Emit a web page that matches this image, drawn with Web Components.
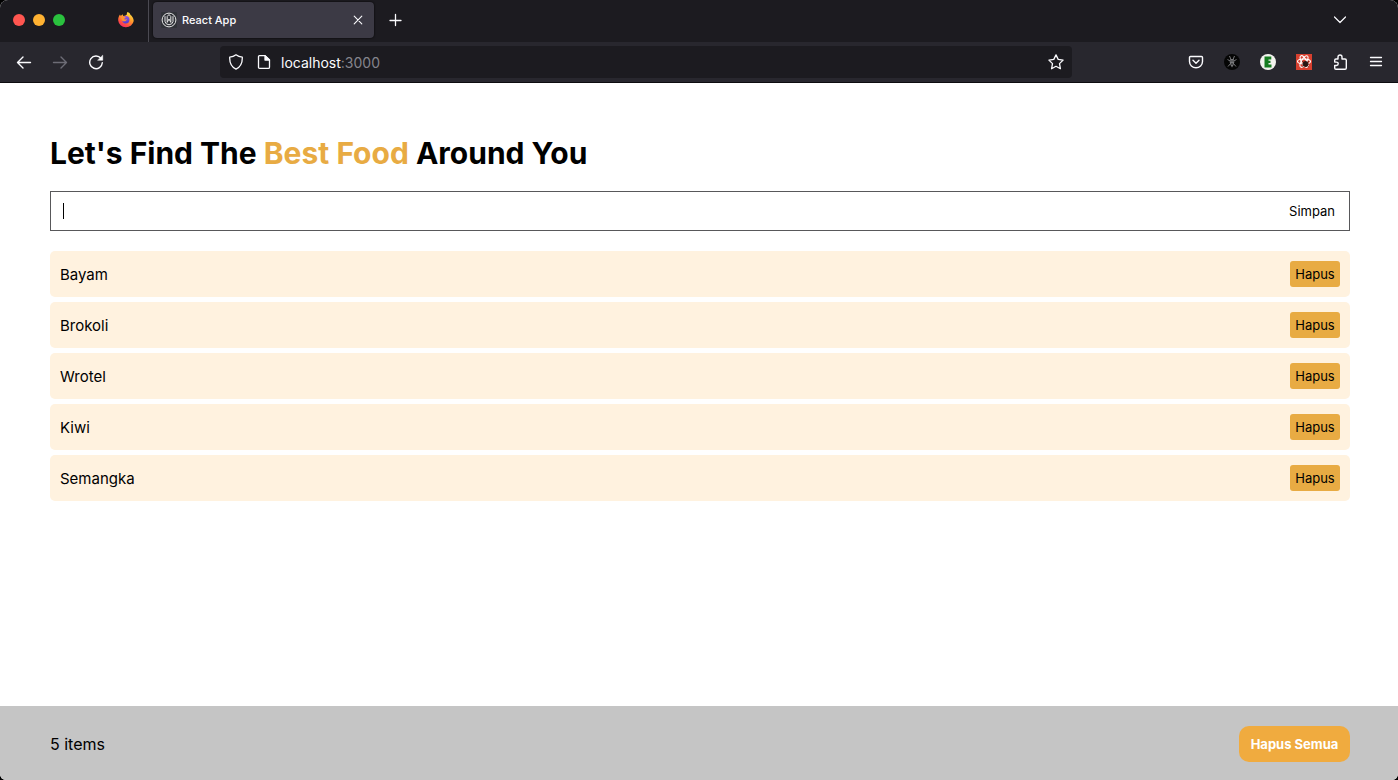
<!DOCTYPE html>
<html lang="id">
<head>
<meta charset="utf-8">
<meta name="viewport" content="width=device-width, initial-scale=1">
<title>React App</title>
<style>
  html { background: #000; }
  body { margin: 0; font-family: Inter, "Liberation Sans", sans-serif; color: #000; }
</style>
</head>
<body>
<browser-window>
  <tab-strip slot="chrome"><browser-tab>React App</browser-tab></tab-strip>
  <nav-toolbar slot="chrome" host="localhost" port=":3000"></nav-toolbar>
  <food-app></food-app>
</browser-window>

<script>
const define = (name, html, setup) => {
  const template = document.createElement('template');
  template.innerHTML = html;
  customElements.define(name, class extends HTMLElement {
    constructor() {
      super();
      this.attachShadow({ mode: 'open' }).append(template.content.cloneNode(true));
    }
    connectedCallback() {
      if (setup && !this.ready) { this.ready = true; setup(this, this.shadowRoot); }
    }
  });
};

define('browser-window', `
  <style>
    :host { display: flex; flex-direction: column; min-height: 100vh; background: #fff; border-radius: 8px 8px 6px 6px; overflow: hidden; }
    main { flex: 1; display: flex; flex-direction: column; }
  </style>
  <header><slot name="chrome"></slot></header>
  <main><slot></slot></main>`);

define('icon-button', `
  <style>
    :host { display: block; width: 36px; height: 32px; color: #fbfbfe; }
    :host([muted]) { color: #6d6c76; }
    button { all: unset; width: 100%; height: 100%; display: grid; place-items: center; }
    ::slotted(svg) { display: block; }
  </style>
  <button type="button"><slot></slot></button>`,
  (el, root) => root.querySelector('button').setAttribute('aria-label', el.getAttribute('label') || ''));

define('browser-tab', `
  <style>
    :host { display: flex; align-items: center; box-sizing: border-box; width: 221px; height: 36px; padding: 0 8px; gap: 5px; border-radius: 4px; background: #3c3a45; color: #fbfbfe; font-size: 11px; font-weight: 500; box-shadow: 0 0 2px #000; }
    .title { flex: 1; }
    svg { display: block; }
    button { all: unset; width: 16px; height: 16px; }
  </style>
  <svg width="16" height="16" viewBox="0 0 16 16" fill="none" stroke="#e6e6e6">
    <rect width="16" height="16" rx="1" fill="#303238" stroke="none"/>
    <circle cx="8" cy="8" r="6.9"/>
    <path d="M4 4.200V9.500Q4.500 12.500 8 12.800Q11.500 12.500 12 9.500V4.200M6.200 10.500V4.500L8 2.500L9.800 4.500V10.500M6.200 10.300L8 7L9.800 10.300"/>
  </svg>
  <span class="title"><slot></slot></span>
  <button type="button" aria-label="Close tab">
    <svg width="16" height="16" viewBox="0 0 16 16" fill="none" stroke="#fbfbfe" stroke-width="1.1" stroke-linecap="round"><path d="M4.2 4.2L11.8 11.8M11.8 4.2L4.2 11.8"/></svg>
  </button>`);

define('tab-strip', `
  <style>
    :host { display: flex; height: 42px; background: #1c1b20; }
    .lights { display: flex; gap: 8px; padding: 14px 0 0 13px; }
    .lights i { width: 12px; height: 12px; border-radius: 50%; }
    .pin { display: grid; place-items: center; width: 44px; height: 40px; margin-left: 39px; }
    .pin svg { display: block; }
    .rule { width: 1px; background: #4b4a52; margin-right: 4px; }
    slot { display: block; padding-top: 2px; }
    .add { margin: 4px 0 0 4px; }
    .all { margin: 4px 40px 0 auto; }
  </style>
  <div class="lights"><i style="background:#ff5650"></i><i style="background:#ffb232"></i><i style="background:#2ac23e"></i></div>
  <div class="pin">
    <svg width="18" height="18" viewBox="0 0 18 18">
      <defs>
        <linearGradient id="flame" x1="14" y1="1" x2="5" y2="17" gradientUnits="userSpaceOnUse"><stop offset="0" stop-color="#fff04a"/><stop offset=".4" stop-color="#ffa02b"/><stop offset=".75" stop-color="#ff4a42"/><stop offset="1" stop-color="#ef1f7c"/></linearGradient>
        <linearGradient id="globe" x1="8" y1="4" x2="9" y2="13" gradientUnits="userSpaceOnUse"><stop offset="0" stop-color="#9a55ef"/><stop offset="1" stop-color="#4c3ccb"/></linearGradient>
      </defs>
      <path d="M10.5 1C12 1.3 13.2 2.7 13.5 4C14.3 4.3 16.7 6.8 16.7 10A7.8 7.2 0 0 1 1.2 9.6C1 7.2 1.8 5.1 3 3.5L3.8 5L5.5 3.3L6.3 5C8 4.8 9.4 4.2 9.8 3.5C9.7 2.5 10 1.6 10.5 1Z" fill="url(#flame)"/>
      <circle cx="8.8" cy="8.8" r="3.7" fill="url(#globe)"/>
      <path d="M4 6C6 4.8 8 5.5 9 6.8C8 6.9 7.3 7.4 7.3 8C8 9 9.3 8.3 10 8C9.7 10.5 6.5 11 5 9.5Z" fill="#ff9130"/>
    </svg>
  </div>
  <div class="rule"></div>
  <slot></slot>
  <icon-button class="add" label="New tab"><svg width="16" height="16" viewBox="0 0 16 16" fill="none" stroke="currentColor" stroke-width="1.3" stroke-linecap="round"><path d="M7.5 2.5V13.5M2 8.5H13"/></svg></icon-button>
  <icon-button class="all" label="List all tabs"><svg width="16" height="16" viewBox="0 0 16 16" fill="none" stroke="currentColor" stroke-width="1.2" stroke-linecap="round" stroke-linejoin="round"><path d="M2.5 5L8 10.5L13.5 5"/></svg></icon-button>`);

define('nav-toolbar', `
  <style>
    :host { display: flex; align-items: center; box-sizing: border-box; height: 41px; padding: 0 4px 0 6px; background: #28272e; border-bottom: 1px solid #0d0c10; }
    .group { display: flex; }
    form { flex: 1; display: flex; align-items: center; height: 32px; margin: 0 106px; border-radius: 4px; background: #1c1b20; color: #fbfbfe; }
    form > svg { display: block; margin-left: 8px; }
    form > svg + svg { margin-left: 12px; }
    .address { flex: 1; margin-left: 9px; font-size: 14px; }
    .port { color: #85848c; }
    form icon-button { width: 32px; }
  </style>
  <div class="group">
    <icon-button label="Back"><svg width="16" height="16" viewBox="0 0 16 16" fill="none" stroke="currentColor" stroke-width="1.4" stroke-linecap="round" stroke-linejoin="round"><path d="M14.5 8.5H1.5M7 3L1.5 8.5L7 14"/></svg></icon-button>
    <icon-button label="Forward" muted><svg width="16" height="16" viewBox="0 0 16 16" fill="none" stroke="currentColor" stroke-width="1.4" stroke-linecap="round" stroke-linejoin="round"><path d="M1.5 8.5H14.5M9 3L14.5 8.5L9 14"/></svg></icon-button>
    <icon-button label="Reload"><svg width="16" height="16" viewBox="0 0 16 16" fill="none" stroke="currentColor" stroke-width="1.4" stroke-linecap="round"><path d="M13 4.5A6.3 6.3 0 1 0 14.3 8.7"/><path d="M14.7 1.6V6.2H10Z" fill="currentColor" stroke-width=".6" stroke-linejoin="round"/></svg></icon-button>
  </div>
  <form>
    <svg width="16" height="16" viewBox="0 0 16 16" fill="none" stroke="#fbfbfe" stroke-width="1.3" stroke-linejoin="round"><path d="M8 .8C9.5 2 12 3 14.3 3.2C14.5 8.5 13 12.8 8 15.2C3 12.8 1.5 8.5 1.7 3.2C4 3 6.5 2 8 .8Z"/></svg>
    <svg width="16" height="16" viewBox="0 0 16 16" fill="none" stroke="#fbfbfe" stroke-width="1.3" stroke-linejoin="round"><path d="M3.5 1.6H9L13.5 6V13.2Q13.5 14.4 12.3 14.4H3.7Q2.5 14.4 2.5 13.2V2.6Q2.5 1.6 3.5 1.6Z"/><path d="M9 1.6V6H13.5Z" fill="#fbfbfe"/></svg>
    <div class="address"><span class="host"></span><span class="port"></span></div>
    <icon-button label="Bookmark"><svg width="16" height="16" viewBox="0 0 16 16" fill="none" stroke="currentColor" stroke-width="1.3" stroke-linejoin="round"><path d="M8 .9L10.2 5.4L15.1 6.1L11.5 9.6L12.4 14.7L8 12.3L3.6 14.7L4.5 9.6L.9 6.1L5.8 5.4Z"/></svg></icon-button>
  </form>
  <div class="group">
    <icon-button label="Pocket"><svg width="16" height="16" viewBox="0 0 16 16" fill="none" stroke="currentColor" stroke-width="1.4" stroke-linecap="round" stroke-linejoin="round"><path d="M2.5 2.5H13.5Q14.5 2.5 14.5 3.5V7.5A6.5 6.3 0 0 1 1.5 7.5V3.5Q1.5 2.5 2.5 2.5Z"/><path d="M5 6.3L8 9.2L11 6.3"/></svg></icon-button>
    <icon-button label="Extension"><svg width="16" height="16" viewBox="0 0 16 16"><circle cx="8" cy="8" r="8" fill="#050505"/><path d="M5.5 2L7 5.500H9L10.500 2M3.500 5.500L8 8L12.500 5.500M4 12.500L7 9M12 12.500L9 9" fill="none" stroke="#77777a"/><path d="M6.300 5H9.700L10.300 8L9.500 11L8 13.500L6.500 11L5.700 8Z" fill="#77777a"/><path d="M6.5 7H7.500M8.500 7H9.500M7 10H9" stroke="#171717"/></svg></icon-button>
    <icon-button label="Evernote clipper"><svg width="16" height="16" viewBox="0 0 16 16"><circle cx="8" cy="8" r="8" fill="#f3f3ee"/><path d="M4.500 2.500H11.300V5.500H8.500V6.700H10.500V9H8.500V10.500H11.500V13.500H4.500Z" fill="#167c20"/></svg></icon-button>
    <icon-button label="React tools"><svg width="16" height="16" viewBox="0 0 16 16"><rect width="16" height="16" fill="#d7402f"/><g fill="none" stroke="#fff" stroke-width="1.1"><ellipse cx="8" cy="7.500" rx="6.500" ry="2.500"/><ellipse cx="8" cy="7.500" rx="6.500" ry="2.500" transform="rotate(60 8 7.500)"/><ellipse cx="8" cy="7.500" rx="6.500" ry="2.500" transform="rotate(120 8 7.500)"/></g><ellipse cx="9.500" cy="10" rx="2.500" ry="3" fill="#291713"/><path d="M6.500 7.500L12.500 12.500M12.500 7.500L6.500 12.500M6 10H13" stroke="#291713"/></svg></icon-button>
    <icon-button label="Extensions"><svg width="16" height="16" viewBox="0 0 16 16" fill="none" stroke="currentColor" stroke-width="1.4" stroke-linejoin="round"><path d="M6 5V3A2 2 0 0 1 10 3V5H13Q14.3 5 14.3 6.3V14Q14.3 15.2 13 15.2H4Q2.7 15.2 2.7 14V11.5H4.5A1.7 1.7 0 0 0 4.5 8.1H2.7V6.3Q2.7 5 4 5Z"/></svg></icon-button>
    <icon-button label="Menu"><svg width="16" height="16" viewBox="0 0 16 16" fill="none" stroke="currentColor" stroke-width="1.3" stroke-linecap="round"><path d="M2.5 3.5H13.5M2.5 7.5H13.5M2.5 11.5H13.5"/></svg></icon-button>
  </div>`,
  (el, root) => {
    root.querySelector('.host').textContent = el.getAttribute('host');
    root.querySelector('.port').textContent = el.getAttribute('port');
  });

define('food-item', `
  <style>
    :host { display: flex; align-items: center; justify-content: space-between; box-sizing: border-box; height: 46px; padding: 0 10px; border-radius: 5px; background: #fff2df; font-size: 15px; }
    button { box-sizing: border-box; min-width: 50px; height: 26px; padding: 0 5px; border: 0; border-radius: 3px; background: #e8ab43; color: #000; font: 13px Inter, "Liberation Sans", sans-serif; }
  </style>
  <slot></slot><button type="button">Hapus</button>`);

define('food-form', `
  <style>
    form { display: flex; box-sizing: border-box; height: 40px; border: 1px solid #58585a; }
    input { flex: 1; min-width: 0; border: 0; outline: 0; padding: 0 12px; font: 14px Inter, "Liberation Sans", sans-serif; caret-color: transparent; background: linear-gradient(#000, #000) 12px center / 1px 16px no-repeat; }
    button { border: 0; padding: 0 14px; background: none; color: #000; font: 13px Inter, "Liberation Sans", sans-serif; }
  </style>
  <form><input type="text" aria-label="Nama makanan"><button type="button">Simpan</button></form>`);

define('food-footer', `
  <style>
    :host { display: flex; align-items: center; justify-content: space-between; padding: 20px 48px 18px 50px; background: #c5c5c5; font-size: 16px; }
    button { min-width: 111px; height: 36px; padding: 0 10px; border: 0; border-radius: 10px; background: #f0ab3f; color: #fff; font: 700 13px Inter, "Liberation Sans", sans-serif; }
  </style>
  <span><slot></slot></span><button type="button">Hapus Semua</button>`);

define('food-app', `
  <style>
    :host { flex: 1; display: flex; flex-direction: column; }
    section { flex: 1; padding: 50px 48px 20px 50px; }
    h1 { margin: 0 0 18px; font-size: 30px; line-height: 40px; font-weight: 700; }
    h1 span { color: #e8ab43; }
    .list { display: grid; gap: 5px; margin-top: 20px; }
  </style>
  <section>
    <h1>Let's Find The <span>Best Food</span> Around You</h1>
    <food-form></food-form>
    <div class="list"></div>
  </section>
  <food-footer></food-footer>`,
  (el, root) => {
    const foods = ['Bayam', 'Brokoli', 'Wrotel', 'Kiwi', 'Semangka'];
    for (const food of foods) {
      const item = document.createElement('food-item');
      item.textContent = food;
      root.querySelector('.list').append(item);
    }
    root.querySelector('food-footer').textContent = foods.length + ' items';
  });
</script>
</body>
</html>
